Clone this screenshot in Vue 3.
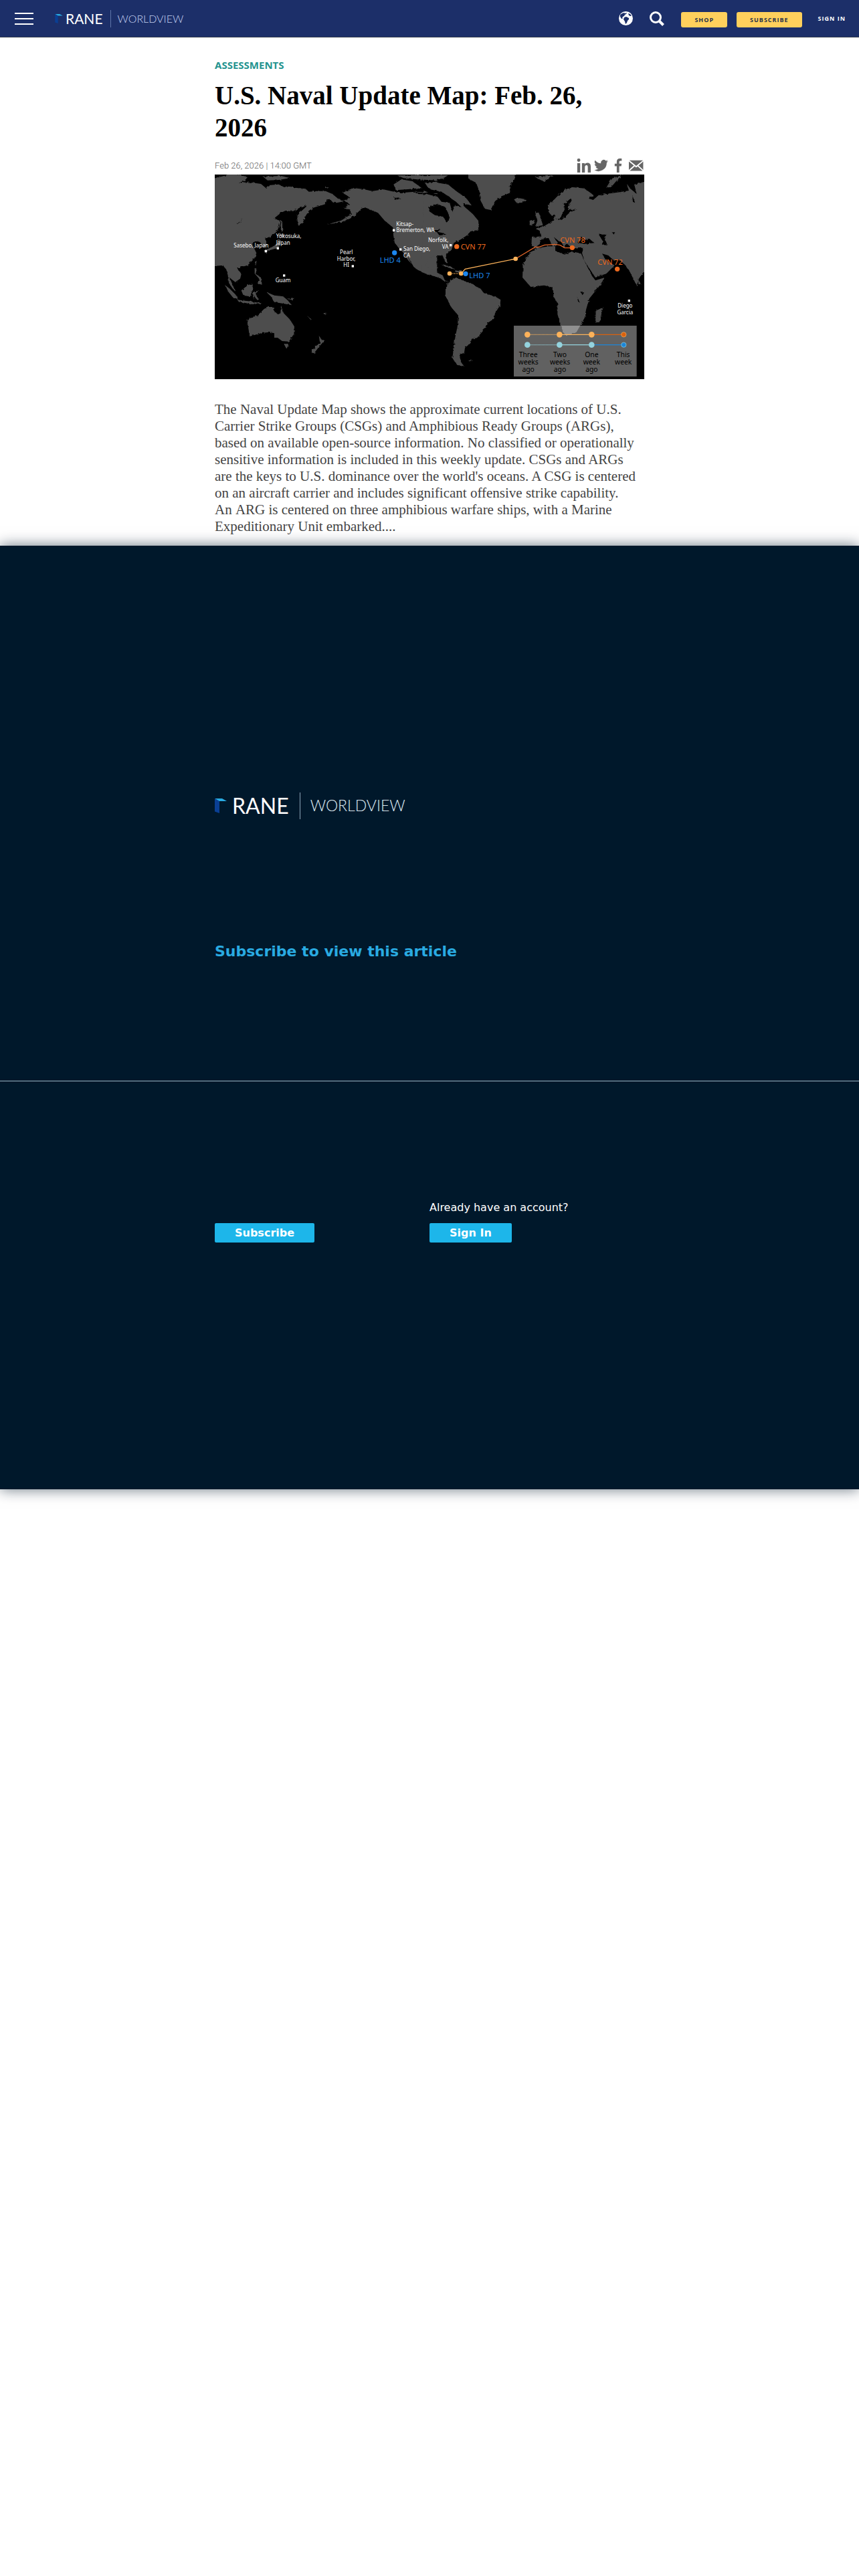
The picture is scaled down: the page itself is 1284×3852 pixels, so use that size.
<template>
  <div class="page">
    <header class="site-header">
      <button class="menu-button" type="button" aria-label="Menu">
        <span></span>
        <span></span>
        <span></span>
      </button>
      <a class="logo" href="#" aria-label="RANE Worldview">
        <svg class="logo-mark" viewBox="0 0 18 22">
          <path d="M0 0h11l7 4H6z" fill="#29abe2" />
          <path d="M0 0l7 4v18l-7-2.500z" fill="#0a3f94" />
        </svg>
        <span class="logo-name">RANE</span>
        <span class="logo-product">WORLDVIEW</span>
      </a>
      <nav class="site-nav">
        <a class="nav-icon" href="#" aria-label="Regions">
          <svg width="21" height="21" viewBox="0 0 21 21">
            <circle cx="10.500" cy="10.500" r="10.500" fill="#fff" />
            <path
              d="M5 3l3-1 1 1 3-1-1 2-2 1-1 2-2 1-1 2 1 1-2 0-2-3 0-3z"
              fill="#1c2f69"
            />
            <path d="M8 9l3-1 4 2 0 2-2 2-1 3-2 2-1-4-2-3z" fill="#1c2f69" />
            <path d="M14 3l3 1 2 3-2 0-2-1z" fill="#1c2f69" />
          </svg>
        </a>
        <a class="nav-icon nav-search" href="#" aria-label="Search">
          <svg width="22" height="22" viewBox="0 0 22 22" fill="none" stroke="#fff">
            <circle cx="9" cy="9" r="7.500" stroke-width="3" />
            <path d="M14.500 14.500l6 6" stroke-width="4" />
          </svg>
        </a>
        <a class="nav-button" href="#">SHOP</a>
        <a class="nav-button" href="#">SUBSCRIBE</a>
        <a class="nav-link" href="#">SIGN IN</a>
      </nav>
    </header>

    <article class="article">
      <a class="category" href="#">ASSESSMENTS</a>
      <h1>U.S. Naval Update Map: Feb. 26, 2026</h1>
      <div class="meta">
        <time datetime="2026-02-26T14:00Z">Feb 26, 2026 | 14:00 GMT</time>
        <div class="share">
          <a v-for="icon in shareIcons" :key="icon.name" href="#" :aria-label="icon.name">
            <svg width="21" height="21" viewBox="0 0 24 24"><path :d="icon.path" /></svg>
          </a>
        </div>
      </div>

      <svg class="map" viewBox="0 0 1926 918" role="img" aria-label="U.S. naval update map">
        <defs>
          <filter id="coast" x="0" y="0" width="100%" height="100%">
            <feTurbulence type="fractalNoise" baseFrequency="0.09" numOctaves="2" seed="4" />
            <feDisplacementMap in="SourceGraphic" scale="11" />
          </filter>
        </defs>
        <rect width="1926" height="918" fill="#000" />
        <g filter="url(#coast)">
          <g transform="translate(-33 -18)">
            <path v-for="d in pacificLand" :key="d" class="land" :d="d" />
          </g>
          <g transform="translate(957 -93)">
            <path v-for="d in atlanticLand" :key="d" class="land" :d="d" />
            <path v-for="d in water" :key="d" :d="d" />
          </g>
        </g>

        <g v-for="base in bases" :key="base.lines[0]" class="base">
          <rect :x="base.x - 5" :y="base.y - 5" width="10" height="10" />
          <text
            v-for="(line, i) in base.lines"
            :key="line"
            :x="base.tx"
            :y="base.ty + i * 29"
            :text-anchor="base.anchor"
          >{{ line }}</text>
        </g>

        <g fill="none" stroke-width="4">
          <path d="M1053 444h52" stroke="#fcb25a" stroke-dasharray="3 4" />
          <path d="M1105 444l18-20 226-46" stroke="#fcb25a" />
          <path d="M1349 378l88-53h18l24-9 50-3 20 4 20 12h46" stroke="#e0662a" />
        </g>
        <circle cx="1053" cy="444" r="10" fill="#fcb25a" />
        <circle cx="1105" cy="444" r="10" fill="#fcb25a" />
        <circle cx="1349" cy="378" r="10" fill="#fcb25a" />
        <g v-for="ship in ships" :key="ship.name" :fill="ship.color" class="ship">
          <circle :cx="ship.x" :cy="ship.y" r="11" />
          <text :x="ship.tx" :y="ship.ty">{{ ship.name }}</text>
        </g>

        <g class="legend">
          <rect x="1341" y="678" width="551" height="228" fill="#fff" fill-opacity="0.38" />
          <g v-for="row in legendRows" :key="row.y" stroke-width="4">
            <path :d="`M1402 ${row.y}h144`" :stroke="row.light" stroke-dasharray="3 3" />
            <path :d="`M1546 ${row.y}h144`" :stroke="row.light" />
            <path :d="`M1690 ${row.y}h144`" :stroke="row.dark" />
            <circle v-for="x in [1402, 1546, 1690]" :key="x" :cx="x" :cy="row.y" r="13" :fill="row.light" />
            <circle cx="1834" :cy="row.y" r="11" :fill="row.dark" :stroke="row.light" stroke-width="2" />
          </g>
          <g v-for="col in legendLabels" :key="col.x">
            <text
              v-for="(word, i) in col.words"
              :key="word"
              :x="col.x"
              :y="818 + i * 33"
              text-anchor="middle"
            >{{ word }}</text>
          </g>
        </g>
      </svg>

      <p class="summary">
        The Naval Update Map shows the approximate current locations of U.S. Carrier Strike Groups
        (CSGs) and Amphibious Ready Groups (ARGs), based on available open-source information. No
        classified or operationally sensitive information is included in this weekly update. CSGs and
        ARGs are the keys to U.S. dominance over the world's oceans. A CSG is centered on an aircraft
        carrier and includes significant offensive strike capability. An&nbsp;ARG is centered on three
        amphibious warfare ships, with a Marine Expeditionary Unit embarked....
      </p>
    </article>

    <section class="paywall">
      <div class="paywall-intro">
        <div class="logo logo-large">
          <svg class="logo-mark" viewBox="0 0 18 22">
            <path d="M0 0h11l7 4H6z" fill="#29abe2" />
            <path d="M0 0l7 4v18l-7-2.500z" fill="#0a3f94" />
          </svg>
          <span class="logo-name">RANE</span>
          <span class="logo-product">WORLDVIEW</span>
        </div>
        <h2>Subscribe to view this article</h2>
      </div>
      <div class="paywall-actions">
        <div class="action">
          <button type="button">Subscribe</button>
        </div>
        <div class="action">
          <p>Already have an account?</p>
          <button type="button">Sign In</button>
        </div>
      </div>
    </section>
  </div>
</template>

<script setup>
const shareIcons = [
  {
    name: 'LinkedIn',
    path: 'M1 8h5v16H1zM3.500 0a2.800 2.800 0 1 1 0 5.600a2.800 2.800 0 0 1 0-5.600zM9 8h4.600v2.200C14.500 8.500 16.300 7.500 18.400 7.500 22.500 7.500 24 10 24 14v10h-5v-9c0-2.200-.5-3.500-2.300-3.500S14 13 14 15v9H9z'
  },
  {
    name: 'Twitter',
    path: 'M24 4.600a10 10 0 0 1-2.800.8 5 5 0 0 0 2.100-2.700 10 10 0 0 1-3.100 1.200 4.900 4.900 0 0 0-8.400 4.500A14 14 0 0 1 1.700 3.200a4.900 4.900 0 0 0 1.500 6.500 5 5 0 0 1-2.200-.6 4.900 4.900 0 0 0 3.900 4.900 5 5 0 0 1-2.200.1 4.900 4.900 0 0 0 4.600 3.400A10 10 0 0 1 0 19.500a14 14 0 0 0 21.500-12.400A10 10 0 0 0 24 4.600z'
  },
  {
    name: 'Facebook',
    path: 'M9 24V13H5.500V8.800H9V5.600C9 2 11 0 14.300 0c1.500 0 2.700.1 3.200.2v3.900h-2.200c-1.700 0-2 .8-2 2v2.700h4l-.6 4.200h-3.400v11z'
  },
  {
    name: 'Email',
    path: 'M1 3h23L12.500 12.500zM0 5l8.500 7L0 19.500zM24.500 5v14.500L16.500 12zM10 13.500l2.500 2 2.500-2 8.500 7.500H1.500z'
  }
]

// Land masses west of the Atlantic seam
const pacificLand = [
  'M20 38L75 24 110 10 150 20 180 30 165 46 140 56 175 52 205 55 240 60 262 78 275 66 320 62 345 75 360 70 400 78 440 82 455 95 490 92 530 92 560 105 585 125 612 138 580 145 560 140 550 128 535 130 530 150 515 155 480 165 455 180 440 205 430 228 408 248 404 225 402 205 418 185 440 165 448 155 425 165 405 170 385 182 350 180 330 190 298 215 325 225 322 250 310 275 285 295 260 305 266 335 250 345 235 320 215 318 200 325 210 350 220 370 210 395 180 425 155 432 135 440 152 465 147 485 125 500 105 485 98 478 112 510 125 542 112 528 95 502 92 470 85 445 70 425 20 430z',
  'M328 222L336 230 337 275 330 272z',
  'M322 283L348 286 345 296 328 300zM320 308L328 312 320 345 300 352 270 360 266 374 256 358 285 346 308 332z',
  'M78 513L100 530 130 560 136 578 115 570 95 545zM135 580L200 588 245 596 200 600 140 588z',
  'M152 538L180 515 200 508 205 530 190 568 160 557z',
  'M205 545L232 538 216 552 228 575 220 578 212 562 205 576z',
  'M213 410L221 405 216 428zM212 438L222 440 216 465 240 480 245 512 225 507 232 485 212 462z',
  'M265 545L300 560 340 565 360 582 378 604 345 598 300 590 290 570zM355 575L390 572 380 580z',
  'M178 668L225 650 255 620 275 612 300 612 298 632 318 645 328 640 330 605 342 640 370 668 390 700 388 735 365 767 335 765 315 750 300 750 300 730 275 725 240 730 190 744 185 715z',
  'M343 778L364 780 355 800z',
  'M500 740L512 758 526 762 505 785 478 820 462 815 495 780 505 775z',
  'M450 655L468 668 462 668zM520 640L535 638 525 646z',
  'M625 90L655 78 700 84 740 92 790 85 830 94 870 100 930 95 1030 100 1030 476 990 465 945 447 925 432 910 405 890 375 915 418 900 402 880 370 860 350 840 325 834 290 832 255 795 225 765 190 730 175 705 165 690 172 665 198 640 215 600 232 535 242 600 224 645 196 640 175 613 170 637 150 612 135 640 122 608 100z',
  'M835 62L870 40 920 48 960 78 900 84 845 88zM850 22L930 20 1030 24 1030 44 940 40 880 34zM975 55L1030 50 1030 86 990 78z',
  'M250 28L330 24 370 34 320 42 270 44zM525 75L545 76 535 82z'
]

// Land masses east of the seam
const atlanticLand = [
  'M-20 165L40 190 60 215 110 222 95 180 120 170 165 192 160 235 200 270 225 300 228 340 190 348 175 365 145 385 115 400 105 430 80 452 86 492 76 484 65 457 30 455 0 470 -10 500 15 518 36 498 35 530 65 545 75 568 95 574 70 570 50 555 0 542 -30 530z',
  'M78 600L90 575 125 555 160 570 190 580 235 605 250 625 300 640 325 655 322 680 300 715 295 740 265 760 250 790 220 825 195 830 190 850 165 870 162 890 140 905 148 935 162 955 130 947 108 915 115 880 120 830 132 770 135 725 105 690 78 640z',
  'M15 125L90 138 130 170 172 200 195 232 165 225 140 210 105 200 60 170 10 160zM-10 96L90 96 65 112 -10 116z',
  'M180 90L395 90 385 120 365 145 368 175 330 190 300 212 280 252 255 247 235 210 230 170 215 130 180 112z',
  'M385 205L400 197 440 205 420 220 395 218z',
  'M60 498L100 505 122 520 80 508zM118 526L150 522 152 534 130 534zM200 335L228 345 205 342z',
  'M540 232L580 190 610 162 650 150 700 155 742 185 720 200 740 207 765 185 800 180 860 172 900 165 890 132 905 155 935 180 925 140 985 120 985 530 965 532 945 560 935 592 905 530 885 500 860 478 830 476 808 456 780 448 800 480 836 500 800 537 750 555 700 480 690 445 697 422 645 424 625 405 608 422 590 395 562 372 582 400 560 418 540 378 510 380 500 405 480 420 463 412 465 375 505 370 500 345 480 335 520 325 560 300 568 272 552 276 540 260z',
  'M478 425L540 415 570 415 570 435 612 452 640 440 686 448 705 490 735 548 750 568 792 555 770 590 722 650 708 700 702 735 665 800 620 817 605 800 580 720 580 670 562 640 560 600 520 590 460 597 423 555 425 500 445 460z',
  'M480 262L495 262 515 320 480 327 490 300zM455 300L475 293 476 313 455 320z',
  'M752 705L785 688 768 755 750 757z',
  'M943 565L953 583 943 588z',
  'M798 152L825 110 875 94 850 115 822 148z',
  'M480 105L560 96 520 125zM180 927L200 926 190 934z'
]

// Inland seas and lakes
const water = [
  'M4 240L40 225 75 238 95 275 85 312 68 282 30 275 5 258z',
  'M20 345L55 338 42 350 62 355 82 362 50 366 40 352z',
  'M590 292L612 250 608 225 640 200 644 210 628 232 625 252 668 250 636 262 600 296 565 290z',
  'M668 398L690 374 705 388 718 378 746 400 700 404z',
  'M765 362L800 362 790 375 804 410 780 408 782 390z',
  'M685 622L700 622 692 634zM668 640L680 668 672 662z',
  'M825 352L838 352 832 362zM915 185L928 220 918 215z',
  'M580 395L600 392 604 412 590 410z',
  'M-858 312L-838 302 -834 284 -839 303 -856 315zM-153 195L-120 202 -150 206z',
  // channels between the arctic islands and the northern bays
  'M-60 172L-20 176 10 170 60 188 50 194 0 182 -50 180z',
  'M95 195L125 215 150 240 120 232 108 262 98 225z'
]

const bases = [
  { x: 229, y: 344, tx: 85, ty: 328, anchor: 'start', lines: ['Sasebo, Japan'] },
  { x: 283, y: 331, tx: 275, ty: 286, anchor: 'start', lines: ['Yokosuka,', 'Japan'] },
  { x: 311, y: 453, tx: 306, ty: 482, anchor: 'middle', lines: ['Guam'] },
  { x: 619, y: 411, tx: 590, ty: 357, anchor: 'middle', lines: ['Pearl', 'Harbor,', 'HI'] },
  { x: 803, y: 250, tx: 814, ty: 230, anchor: 'start', lines: ['Kitsap-', 'Bremerton, WA'] },
  { x: 833, y: 336, tx: 846, ty: 342, anchor: 'start', lines: ['San Diego,', 'CA'] },
  { x: 1058, y: 317, tx: 1048, ty: 304, anchor: 'end', lines: ['Norfolk,', 'VA'] },
  { x: 1858, y: 566, tx: 1840, ty: 597, anchor: 'middle', lines: ['Diego', 'Garcia'] }
]

const ships = [
  { name: 'LHD 4', x: 806, y: 351, tx: 740, ty: 396, color: '#1c86ee' },
  { name: 'LHD 7', x: 1125, y: 445, tx: 1141, ty: 465, color: '#1c86ee' },
  { name: 'CVN 77', x: 1085, y: 323, tx: 1103, ty: 336, color: '#ee6a1f' },
  { name: 'CVN 78', x: 1603, y: 328, tx: 1549, ty: 307, color: '#ee6a1f' },
  { name: 'CVN 72', x: 1805, y: 424, tx: 1717, ty: 404, color: '#ee6a1f' }
]

const legendRows = [
  { y: 718, light: '#fcb25a', dark: '#d9610f' },
  { y: 764, light: '#94d3de', dark: '#1c86d9' }
]

const legendLabels = [
  { x: 1406, words: ['Three', 'weeks', 'ago'] },
  { x: 1548, words: ['Two', 'weeks', 'ago'] },
  { x: 1690, words: ['One', 'week', 'ago'] },
  { x: 1832, words: ['This', 'week'] }
]
</script>

<style>
body {
  margin: 0;
  background: #fff;
}
</style>

<style scoped>
.page {
  box-sizing: border-box;
  min-height: 100vh;
  padding-bottom: 40px;
  font-family: "Noto Sans", "Open Sans", sans-serif;
}

a {
  color: inherit;
  text-decoration: none;
}

/* Header */
.site-header {
  display: flex;
  align-items: center;
  height: 55px;
  padding: 0 20px 0 22px;
  background: #1c2f69;
  border-bottom: 1px solid #333c4c;
}

.menu-button {
  display: flex;
  flex-direction: column;
  gap: 6px;
  width: 28px;
  margin-right: 32px;
  padding: 0;
  border: 0;
  background: none;
}

.menu-button span {
  height: 2px;
  background: #fff;
}

.logo {
  display: flex;
  align-items: center;
  color: #fff;
  font-family: Lato, sans-serif;
  line-height: 1;
}

.logo-mark {
  width: 12px;
  height: 14px;
}

.logo-name {
  margin: 0 11px 0 4px;
  font-size: 21px;
}

.logo-product {
  padding: 5px 0 5px 10px;
  border-left: 1px solid #5e74a8;
  color: #c3cff0;
  font-size: 16px;
  font-weight: 300;
}

.site-nav {
  display: flex;
  align-items: center;
  margin-left: auto;
  font-family: "Open Sans", sans-serif;
  font-size: 9px;
  font-weight: 700;
  letter-spacing: 1px;
}

.nav-icon {
  display: flex;
  margin-right: 25px;
}

.nav-button {
  margin: 4px 14px 0 0;
  padding: 0 20px;
  border-radius: 3px;
  background: #ffd05c;
  color: #26324a;
  line-height: 23px;
}

.nav-link {
  margin-left: 10px;
  color: #fff;
}

/* Article */
.article {
  width: 50%;
  margin: 0 auto;
  padding-top: 30px;
}

.category {
  display: block;
  color: #24938f;
  font-size: 15px;
  font-weight: 700;
  line-height: 22px;
}

h1 {
  margin: 11px 0 22px;
  padding-right: 40px;
  color: #000;
  font-family: "Liberation Serif", serif;
  font-size: 39px;
  line-height: 48px;
}

.meta {
  display: flex;
  align-items: flex-end;
  justify-content: space-between;
  padding-bottom: 3px;
}

time {
  color: #666;
  font-family: Roboto, sans-serif;
  font-size: 13px;
  font-weight: 300;
  line-height: 20px;
}

.share {
  display: flex;
  gap: 5px;
  padding-right: 2px;
}

.share a {
  display: flex;
}

.share svg {
  overflow: visible;
  fill: #666;
}

.map {
  display: block;
  width: 100%;
}

.land {
  fill: #4d4d4d;
}

.base {
  fill: #fff;
  font-size: 24px;
}

.ship text {
  font-size: 33px;
}

.legend text {
  fill: #000;
  font-size: 31px;
}

.summary {
  margin: 0;
  padding: 33px 4px 16px 0;
  color: #444;
  font-family: "Liberation Serif", serif;
  font-size: 21px;
  line-height: 25px;
}

/* Paywall */
.paywall {
  background: #00182b;
  box-shadow: 0 0 20px rgba(0, 24, 43, 0.6);
  color: #fff;
  font-family: "DejaVu Sans", sans-serif;
}

.paywall-intro {
  padding: 369px 25% 180px;
  border-bottom: 1px solid #9fb3c5;
}

.logo-large .logo-mark {
  width: 18px;
  height: 22px;
}

.logo-large .logo-name {
  margin: 0 16px 0 8px;
  font-size: 32px;
}

.logo-large .logo-product {
  padding: 8px 0 9px 15px;
  border-color: #8fa5b8;
  color: #dbe7f0;
  font-size: 23px;
}

h2 {
  margin: 185px 0 0;
  color: #29abe2;
  font-size: 22px;
  line-height: 26px;
}

.paywall-actions {
  display: grid;
  grid-template-columns: 1fr 1fr;
  align-items: end;
  padding: 177px 25% 369px;
}

.action p {
  margin: 0 0 11px;
  font-size: 16px;
  line-height: 24px;
}

.action button {
  display: block;
  padding: 0 30px;
  border: 0;
  border-radius: 2px;
  background: #1db6ea;
  color: #fff;
  font-family: inherit;
  font-size: 16px;
  font-weight: 700;
  line-height: 29px;
}
</style>
